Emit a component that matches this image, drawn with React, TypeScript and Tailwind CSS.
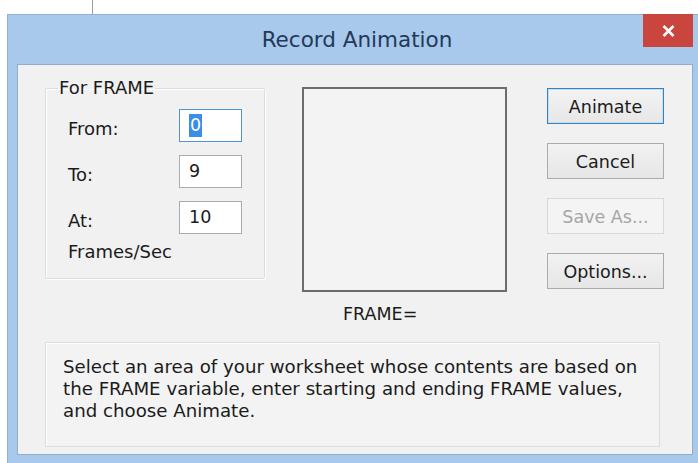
import React, { useState } from 'react';

type DialogButtonProps = {
  text: string;
  primary?: boolean;
  disabled?: boolean;
};

const DialogButton = (props: DialogButtonProps) => {
  const base = 'w-[117px] h-[36px] border text-[17.5px] leading-none pt-[3px] flex items-center justify-center';
  const look = props.disabled
    ? 'border-[#d8d8d8] bg-[#f4f4f4] text-[#a6a6a6]'
    : props.primary
      ? 'border-[#3d7fb8] bg-gradient-to-b from-[#f3f3f3] to-[#e7e7e7] text-[#1b1b1b] shadow-[inset_0_0_0_1px_#bfe0f7]'
      : 'border-[#acacac] bg-gradient-to-b from-[#f2f2f2] to-[#e6e6e6] text-[#1b1b1b]';
  return (
    <button type="button" disabled={props.disabled} className={`${base} ${look}`}>
      {props.text}
    </button>
  );
};

type FieldRowProps = {
  label: string;
  value: string;
  focused?: boolean;
};

const FieldRow = (props: FieldRowProps) => (
  <div className="flex items-center h-[33px]">
    <span className="w-[111px] text-[18px] pt-[5px]">{props.label}</span>
    <div
      className={`w-[63px] h-[33px] bg-white border flex items-center pl-[9px] text-[17.5px] ${
        props.focused ? 'border-[#4f95d6]' : 'border-[#a9abb2]'
      }`}
    >
      {props.focused ? <span className="bg-[#3a8ee6] text-white px-[1px] leading-[23px]">{props.value}</span> : props.value}
    </div>
  </div>
);

const App = () => {
  const [values] = useState({ from: '0', to: '9', at: '10' });

  return (
    <div
      className="w-[698px] h-[463px] bg-white overflow-hidden flex flex-col text-[#1b1b1b]"
      style={{ fontFamily: '"DejaVu Sans", "Open Sans", sans-serif' }}
    >
      {/* worksheet gridline peeking above the dialog */}
      <div className="h-[14px] shrink-0">
        <div className="ml-[92px] h-full border-l border-[#9a9a9a]" />
      </div>

      <div className="ml-[7px] w-[695px] flex-1 flex flex-col bg-[#a8c9eb] border-t border-l border-[#8fb3d8]">
        {/* title bar */}
        <div className="relative h-[49px] shrink-0 flex items-center justify-center">
          <span className="text-[21.5px] text-[#22395a] mt-[1px] ml-[4px]">Record Animation</span>
          <div className="absolute right-[9px] -top-[1px] w-[50px] h-[33px] bg-[#c9453d] flex items-center justify-center">
            <svg width="13" height="12" viewBox="0 0 13 12">
              <path d="M1.5 1 L11.5 11 M11.5 1 L1.5 11" stroke="#ffffff" strokeWidth="2.6" />
            </svg>
          </div>
        </div>

        {/* client area */}
        <div className="mx-[9px] h-[391px] bg-[#f1f1f1] border border-[#8eaed0] pl-[27px] pt-[22px]">
          <div className="flex items-start">
            <fieldset className="w-[218px] h-[203px] border border-[#d9dde0] rounded-[2px] shadow-[inset_1px_1px_0_#ffffff,1px_1px_0_#ffffff] px-[22px] -mt-[11px]">
              <legend className="ml-[-10px] px-[1px] text-[18px] leading-[24px]">For FRAME</legend>
              <div className="flex flex-col gap-[13px] mt-[9px]">
                <FieldRow label="From:" value={values.from} focused />
                <FieldRow label="To:" value={values.to} />
                <FieldRow label="At:" value={values.at} />
              </div>
              <div className="text-[18px] leading-[24px] mt-[6px]">Frames/Sec</div>
            </fieldset>

            <div className="ml-[37px] flex flex-col">
              <div className="w-[205px] h-[205px] border-2 border-[#6c6c6c] bg-[#f3f3f3]" />
              <div className="pl-[41px] mt-[10px] h-[24px] leading-[24px] text-[17.5px]">FRAME=</div>
            </div>

            <div className="ml-[40px] mt-[1px] flex flex-col gap-[19px]">
              <DialogButton text="Animate" primary />
              <DialogButton text="Cancel" />
              <DialogButton text="Save As..." disabled />
              <DialogButton text="Options..." />
            </div>
          </div>

          <div className="mt-[16px] w-[615px] h-[105px] border border-[#dcdcdc] shadow-[inset_1px_1px_0_#ffffff] bg-[#f3f3f3] pl-[17px] pt-[13px] text-[18.2px] leading-[22px]">
            Select an area of your worksheet whose contents are based on
            <br />
            the FRAME variable, enter starting and ending FRAME values,
            <br />
            and choose Animate.
          </div>
        </div>
      </div>
    </div>
  );
};

export default App;
